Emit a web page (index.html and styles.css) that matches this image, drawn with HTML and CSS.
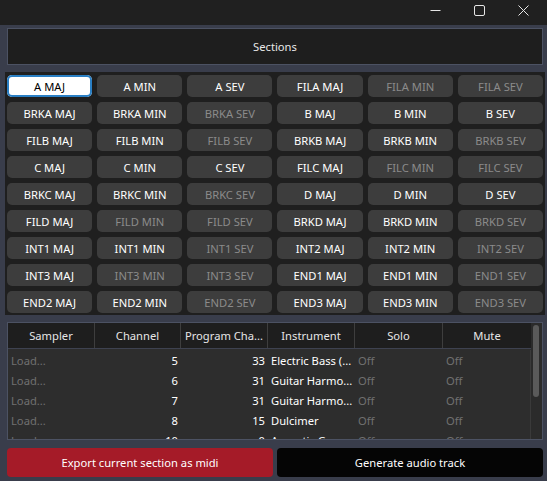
FILE: index.html
```html
<!DOCTYPE html>
<html>
<head>
<meta charset="utf-8">
<link rel="stylesheet" href="styles.css">
</head>
<body>
<div class="window">
  <div class="titlebar">
    <span class="tb-btn">
      <svg width="11" height="11" viewBox="0 0 11 11"><line x1="0.5" y1="5.5" x2="10.5" y2="5.5" stroke="#e6e6e6" stroke-width="1"/></svg>
    </span>
    <span class="tb-btn">
      <svg width="11" height="11" viewBox="0 0 11 11"><rect x="0.5" y="0.5" width="10" height="10" rx="1.5" fill="none" stroke="#e6e6e6" stroke-width="1"/></svg>
    </span>
    <span class="tb-btn">
      <svg width="11" height="11" viewBox="0 0 11 11"><path d="M0.5 0.5 L10.5 10.5 M10.5 0.5 L0.5 10.5" stroke="#e6e6e6" stroke-width="1"/></svg>
    </span>
  </div>

  <div class="sections">Sections</div>

  <div class="grid-wrap">
    <div class="grid">
      <button class="sec selected">A MAJ</button>
      <button class="sec">A MIN</button>
      <button class="sec">A SEV</button>
      <button class="sec">FILA MAJ</button>
      <button class="sec off">FILA MIN</button>
      <button class="sec off">FILA SEV</button>

      <button class="sec">BRKA MAJ</button>
      <button class="sec">BRKA MIN</button>
      <button class="sec off">BRKA SEV</button>
      <button class="sec">B MAJ</button>
      <button class="sec">B MIN</button>
      <button class="sec">B SEV</button>

      <button class="sec">FILB MAJ</button>
      <button class="sec">FILB MIN</button>
      <button class="sec off">FILB SEV</button>
      <button class="sec">BRKB MAJ</button>
      <button class="sec">BRKB MIN</button>
      <button class="sec off">BRKB SEV</button>

      <button class="sec">C MAJ</button>
      <button class="sec">C MIN</button>
      <button class="sec">C SEV</button>
      <button class="sec">FILC MAJ</button>
      <button class="sec off">FILC MIN</button>
      <button class="sec off">FILC SEV</button>

      <button class="sec">BRKC MAJ</button>
      <button class="sec">BRKC MIN</button>
      <button class="sec off">BRKC SEV</button>
      <button class="sec">D MAJ</button>
      <button class="sec">D MIN</button>
      <button class="sec">D SEV</button>

      <button class="sec">FILD MAJ</button>
      <button class="sec off">FILD MIN</button>
      <button class="sec off">FILD SEV</button>
      <button class="sec">BRKD MAJ</button>
      <button class="sec">BRKD MIN</button>
      <button class="sec off">BRKD SEV</button>

      <button class="sec">INT1 MAJ</button>
      <button class="sec">INT1 MIN</button>
      <button class="sec off">INT1 SEV</button>
      <button class="sec">INT2 MAJ</button>
      <button class="sec">INT2 MIN</button>
      <button class="sec off">INT2 SEV</button>

      <button class="sec">INT3 MAJ</button>
      <button class="sec off">INT3 MIN</button>
      <button class="sec off">INT3 SEV</button>
      <button class="sec">END1 MAJ</button>
      <button class="sec">END1 MIN</button>
      <button class="sec off">END1 SEV</button>

      <button class="sec">END2 MAJ</button>
      <button class="sec">END2 MIN</button>
      <button class="sec off">END2 SEV</button>
      <button class="sec">END3 MAJ</button>
      <button class="sec">END3 MIN</button>
      <button class="sec off">END3 SEV</button>
    </div>
  </div>

  <div class="table">
    <div class="table-main">
      <div class="thead">
        <div class="th">Sampler</div>
        <div class="th">Channel</div>
        <div class="th">Program Cha...</div>
        <div class="th">Instrument</div>
        <div class="th">Solo</div>
        <div class="th">Mute</div>
      </div>
      <div class="tbody">
        <div class="tr">
          <div class="td dim">Load...</div><div class="td num">5</div><div class="td num">33</div><div class="td">Electric Bass (...</div><div class="td dim">Off</div><div class="td dim">Off</div>
        </div>
        <div class="tr">
          <div class="td dim">Load...</div><div class="td num">6</div><div class="td num">31</div><div class="td">Guitar Harmo...</div><div class="td dim">Off</div><div class="td dim">Off</div>
        </div>
        <div class="tr">
          <div class="td dim">Load...</div><div class="td num">7</div><div class="td num">31</div><div class="td">Guitar Harmo...</div><div class="td dim">Off</div><div class="td dim">Off</div>
        </div>
        <div class="tr">
          <div class="td dim">Load...</div><div class="td num">8</div><div class="td num">15</div><div class="td">Dulcimer</div><div class="td dim">Off</div><div class="td dim">Off</div>
        </div>
        <div class="tr">
          <div class="td dim">Load...</div><div class="td num">10</div><div class="td num">0</div><div class="td">Acoustic Gra...</div><div class="td dim">Off</div><div class="td dim">Off</div>
        </div>
      </div>
    </div>
    <div class="scrollbar"><div class="thumb"></div></div>
  </div>

  <div class="actions">
    <button class="action export">Export current section as midi</button>
    <button class="action generate">Generate audio track</button>
  </div>
</div>
</body>
</html>
```

FILE: styles.css
```css
html, body {
  margin: 0;
  padding: 0;
}
body {
  background: #393d4b;
  font-family: "Noto Sans", "Open Sans", sans-serif;
  font-size: 11.2px;
  color: #ffffff;
}
.window {
  width: 547px;
  height: 481px;
  overflow: hidden;
  display: flex;
  flex-direction: column;
}
.titlebar {
  height: 25px;
  background: #202020;
  display: flex;
  justify-content: flex-end;
  align-items: flex-start;
  padding-right: 18px;
  gap: 33px;
  box-sizing: border-box;
}
.tb-btn {
  width: 11px;
  height: 11px;
  margin-top: 5px;
  display: block;
}
.tb-btn svg {
  display: block;
}
.sections {
  margin: 3px 4px 0 7px;
  height: 37px;
  box-sizing: border-box;
  border: 1px solid #4c5263;
  background: #1e1e1e;
  display: flex;
  align-items: center;
  justify-content: center;
  color: #e8e8e8;
}
.grid-wrap {
  margin: 7px 2px 0 5px;
  background: #1f1f1f;
  padding: 3px 2px 2px 2px;
}
.grid {
  display: grid;
  grid-template-columns: repeat(6, 1fr);
  grid-auto-rows: 22px;
  gap: 5px;
}
.sec {
  font: inherit;
  margin: 0;
  padding: 0;
  border: none;
  border-radius: 5px;
  background: #3d3d3d;
  color: #ffffff;
  text-align: center;
  white-space: nowrap;
}
.sec.off {
  color: #8b8b8b;
}
.sec.selected {
  background: #ffffff;
  color: #000000;
  box-shadow: inset 0 0 0 2px #2a7fc4;
}
.table {
  margin: 7px 4px 0 7px;
  height: 118px;
  box-sizing: border-box;
  border: 1px solid #4c5263;
  background: #2d2d2d;
  display: flex;
  overflow: hidden;
}
.table-main {
  flex: 1;
  overflow: hidden;
}
.thead, .tr {
  display: grid;
  grid-template-columns: 87px 86px 87px 87px 88px 1fr;
}
.thead {
  height: 25px;
  background: #1e1e1e;
  border-bottom: 1px solid #3e4250;
}
.th {
  display: flex;
  align-items: center;
  justify-content: center;
  color: #e6e6e6;
  border-right: 1px solid #3e3e3e;
  white-space: nowrap;
  overflow: hidden;
}
.th:last-child {
  border-right: none;
}
.tbody {
  padding-top: 1px;
}
.tr {
  height: 20px;
  border-right: 1px solid #3a3a3a;
}
.td {
  display: flex;
  align-items: center;
  padding: 0 3px;
  white-space: nowrap;
  overflow: hidden;
}
.td.num {
  justify-content: flex-end;
}
.td.dim {
  color: #707070;
}
.scrollbar {
  width: 11px;
  background: #2b2b2b;
  padding: 2px 3px 0 2px;
  box-sizing: border-box;
}
.thumb {
  height: 72px;
  background: #5a5a5a;
  border-radius: 4px;
}
.actions {
  margin: 8px 4px 0 7px;
  display: flex;
  gap: 4px;
}
.action {
  flex: 1;
  height: 29px;
  font: inherit;
  border: none;
  border-radius: 4px;
  color: #ffffff;
  padding: 0;
}
.export {
  background: #a51b28;
}
.generate {
  background: #050505;
}
```
